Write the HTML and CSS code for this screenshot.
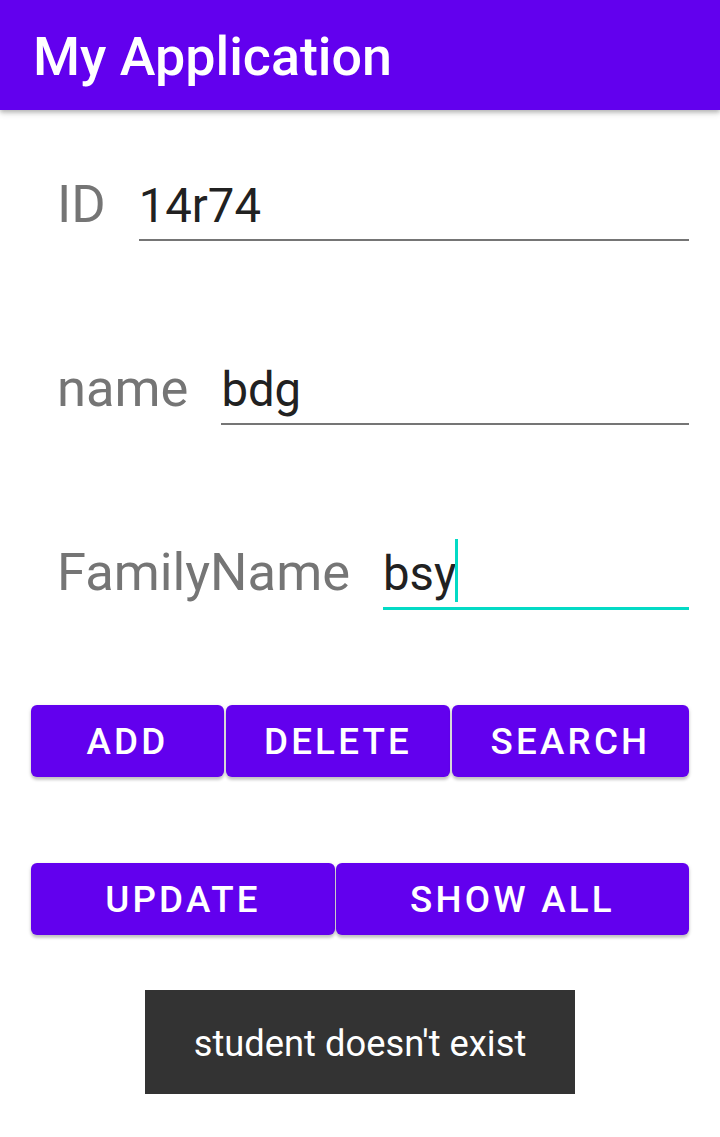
FILE: index.html
```html
<!DOCTYPE html>
<html lang="en">
<head>
<meta charset="utf-8">
<title>My Application</title>
<link rel="stylesheet" href="styles.css">
</head>
<body>
<header class="appbar">
  <h1 class="appbar-title">My Application</h1>
</header>
<main class="content">
  <section class="form">
    <div class="row">
      <span class="label">ID</span>
      <div class="field">14r74</div>
    </div>
    <div class="row">
      <span class="label">name</span>
      <div class="field">bdg</div>
    </div>
    <div class="row">
      <span class="label">FamilyName</span>
      <div class="field field-focused">bsy<span class="caret"></span></div>
    </div>
  </section>
  <div class="buttons buttons-top">
    <button class="btn">Add</button>
    <button class="btn">Delete</button>
    <button class="btn">Search</button>
  </div>
  <div class="buttons buttons-bottom">
    <button class="btn">Update</button>
    <button class="btn">Show all</button>
  </div>
  <div class="toast-wrap">
    <div class="toast">student doesn't exist</div>
  </div>
</main>
</body>
</html>
```

FILE: styles.css
```css
* { box-sizing: border-box; }

html, body {
  margin: 0;
  padding: 0;
  background: #ffffff;
}

body {
  font-family: Roboto, "Liberation Sans", sans-serif;
  width: 720px;
  height: 1137px;
  overflow: hidden;
}

.appbar {
  position: relative;
  z-index: 2;
  height: 110px;
  background: #6200ee;
  padding: 4px 0 0 33px;
  box-shadow: 0 2px 4px rgba(0, 0, 0, 0.2), 0 4px 6px rgba(0, 0, 0, 0.12);
}

.appbar-title {
  margin: 0;
  font-size: 53.8px;
  font-weight: 500;
  line-height: 106px;
  color: #ffffff;
}

.content {
  display: flex;
  flex-direction: column;
}

.form {
  display: flex;
  flex-direction: column;
  gap: 117px;
  margin-top: 64px;
}

.row {
  display: flex;
  align-items: baseline;
  gap: 33px;
  padding: 0 31px 0 57px;
}

.label {
  font-size: 52.5px;
  line-height: 60px;
  color: #757575;
  white-space: nowrap;
}

.field {
  flex: 1;
  font-size: 47.25px;
  line-height: 60px;
  color: #212121;
  padding-bottom: 3px;
  border-bottom: 2px solid #757575;
}

.field-focused {
  border-bottom: 3px solid #03dac5;
}

.caret {
  display: inline-block;
  width: 3px;
  height: 63px;
  margin-top: -6px;
  margin-left: -1px;
  vertical-align: -12px;
  background: #03dac5;
}

.buttons {
  display: grid;
  padding: 0 31px;
}

.buttons-top {
  grid-template-columns: 193px 224px 237px;
  gap: 2px;
  margin-top: 95px;
}

.buttons-bottom {
  grid-template-columns: 304px 353px;
  gap: 1px;
  margin-top: 86px;
}

.btn {
  height: 72px;
  border: none;
  border-radius: 6px;
  background: #6200ee;
  color: #ffffff;
  font-family: Roboto, "Liberation Sans", sans-serif;
  font-size: 36.75px;
  font-weight: 500;
  letter-spacing: 3.2px;
  text-transform: uppercase;
  padding: 0;
  box-shadow: 0 3px 3px rgba(0, 0, 0, 0.18), 0 1px 4px rgba(0, 0, 0, 0.12);
}

.toast-wrap {
  display: flex;
  justify-content: center;
  margin-top: 55px;
}

.toast {
  height: 104px;
  padding: 3px 49px 0;
  background: #333333;
  color: #ffffff;
  font-size: 36.3px;
  line-height: 101px;
  white-space: nowrap;
}
```
